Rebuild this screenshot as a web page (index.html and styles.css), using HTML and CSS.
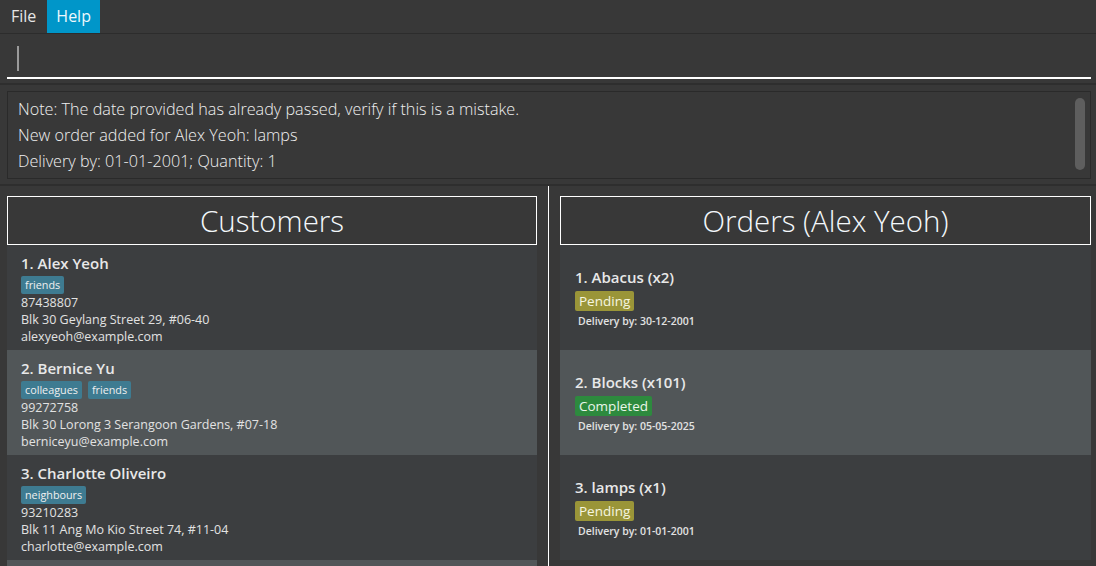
FILE: index.html
```html
<!DOCTYPE html>
<html>
<head>
<meta charset="utf-8">
<link rel="stylesheet" href="styles.css">
</head>
<body>
<div class="app">
  <div class="menubar">
    <span class="menu">File</span>
    <span class="menu active">Help</span>
  </div>
  <div class="command">
    <div class="cmd-field"><span class="caret"></span></div>
  </div>
  <div class="result-wrap">
    <div class="result">
      <div class="result-text">
        <div>Note: The date provided has already passed, verify if this is a mistake.</div>
        <div>New order added for Alex Yeoh: lamps</div>
        <div>Delivery by: 01-01-2001; Quantity: 1</div>
      </div>
      <div class="scrollbar"><div class="thumb"></div></div>
    </div>
  </div>
  <div class="split">
    <div class="pane left">
      <div class="pane-title">Customers</div>
      <div class="list">
        <div class="card dark">
          <div class="name">1. Alex Yeoh</div>
          <div class="tags"><span class="tag">friends</span></div>
          <div class="line">87438807</div>
          <div class="line">Blk 30 Geylang Street 29, #06-40</div>
          <div class="line">alexyeoh@example.com</div>
        </div>
        <div class="card light">
          <div class="name">2. Bernice Yu</div>
          <div class="tags"><span class="tag">colleagues</span><span class="tag">friends</span></div>
          <div class="line">99272758</div>
          <div class="line">Blk 30 Lorong 3 Serangoon Gardens, #07-18</div>
          <div class="line">berniceyu@example.com</div>
        </div>
        <div class="card dark">
          <div class="name">3. Charlotte Oliveiro</div>
          <div class="tags"><span class="tag">neighbours</span></div>
          <div class="line">93210283</div>
          <div class="line">Blk 11 Ang Mo Kio Street 74, #11-04</div>
          <div class="line">charlotte@example.com</div>
        </div>
        <div class="card light"></div>
      </div>
    </div>
    <div class="divider"></div>
    <div class="pane right">
      <div class="pane-title">Orders (Alex Yeoh)</div>
      <div class="list">
        <div class="order dark">
          <div class="name">1. Abacus (x2)</div>
          <div><span class="status pending">Pending</span></div>
          <div class="delivery">Delivery by: 30-12-2001</div>
        </div>
        <div class="order light">
          <div class="name">2. Blocks (x101)</div>
          <div><span class="status completed">Completed</span></div>
          <div class="delivery">Delivery by: 05-05-2025</div>
        </div>
        <div class="order dark">
          <div class="name">3. lamps (x1)</div>
          <div><span class="status pending">Pending</span></div>
          <div class="delivery">Delivery by: 01-01-2001</div>
        </div>
      </div>
    </div>
  </div>
</div>
</body>
</html>
```
FILE: styles.css
```css
* { box-sizing: border-box; }
html, body { margin: 0; padding: 0; }
body {
  background: #383838;
  font-family: "Open Sans", "Noto Sans", sans-serif;
  color: #ffffff;
  width: 1096px;
  height: 566px;
  overflow: hidden;
}
.app { display: flex; flex-direction: column; height: 566px; }

.menubar {
  height: 34px;
  display: flex;
  border-bottom: 1px solid #2c2c2c;
  background: #383838;
}
.menu {
  font-size: 16px;
  color: #e6e6e6;
  padding: 0 11px 0 11px;
  line-height: 33px;
  height: 33px;
}
.menu.active { background: #0096c9; color: #eef8fc; padding: 0 9px 0 9px; width: 53px; }

.command {
  height: 51px;
  padding: 0 5px 0 7px;
  border-bottom: 2px solid #2e2e2e;
}
.cmd-field {
  height: 45px;
  border-bottom: 2px solid #ffffff;
  position: relative;
}
.caret {
  position: absolute;
  left: 10px;
  top: 12px;
  width: 2px;
  height: 25px;
  background: #9a9a9a;
}

.result-wrap {
  padding: 6px 5px 5px 7px;
  height: 101px;
  border-bottom: 2px solid #2e2e2e;
}
.result {
  height: 88px;
  border: 1px solid #2a2a2a;
  display: flex;
  padding: 4px 5px 0 10px;
}
.result-text {
  flex: 1;
  font-size: 16.2px;
  line-height: 26px;
  color: #f0f0f0;
  font-weight: 300;
}
.scrollbar { width: 10px; padding-top: 2px; }
.thumb { width: 10px; height: 72px; background: #5e5e5e; border-radius: 5px; }

.split { flex: 1; display: flex; min-height: 0; }
.pane { display: flex; flex-direction: column; padding-top: 10px; }
.pane.left { width: 548px; padding-left: 7px; padding-right: 11px; }
.pane.right { flex: 1; padding-left: 11px; padding-right: 5px; }
.divider { width: 1px; background: #ffffff; }

.pane-title {
  height: 49px;
  border: 1px solid #ffffff;
  text-align: center;
  font-size: 29.5px;
  font-weight: 300;
  line-height: 47px;
  color: #f4f8fc;
}
.list { flex: 1; overflow: hidden; }
.dark { background: #3c3e40; }
.light { background: #515658; }

.card {
  height: 105px;
  padding: 8px 0 0 14px;
  color: #e0e0e0;
}
.name {
  font-size: 15px;
  font-weight: 600;
  line-height: 20px;
  color: #e8e8e8;
}
.tags { display: flex; gap: 6px; margin-top: 3px; height: 18px; }
.tag {
  background: #3e7b91;
  color: #f0f0f0;
  font-size: 10.8px;
  line-height: 17px;
  padding: 0 4px;
  border-radius: 2px;
}
.line { font-size: 12.5px; line-height: 17px; color: #e2e2e2; }

.order {
  height: 105px;
  padding: 22px 0 0 15px;
}
.status {
  display: inline-block;
  margin-top: 4px;
  font-size: 13.5px;
  line-height: 20px;
  padding: 0 4px;
  border-radius: 2px;
  color: #f6f6e0;
}
.pending { background: #9a9538; }
.completed { background: #2d8a3e; color: #eaf6ea; }
.delivery {
  font-size: 10.5px;
  font-weight: 600;
  color: #e2e2e2;
  margin-top: 2px;
  padding-left: 3px;
  line-height: 16px;
}
```
